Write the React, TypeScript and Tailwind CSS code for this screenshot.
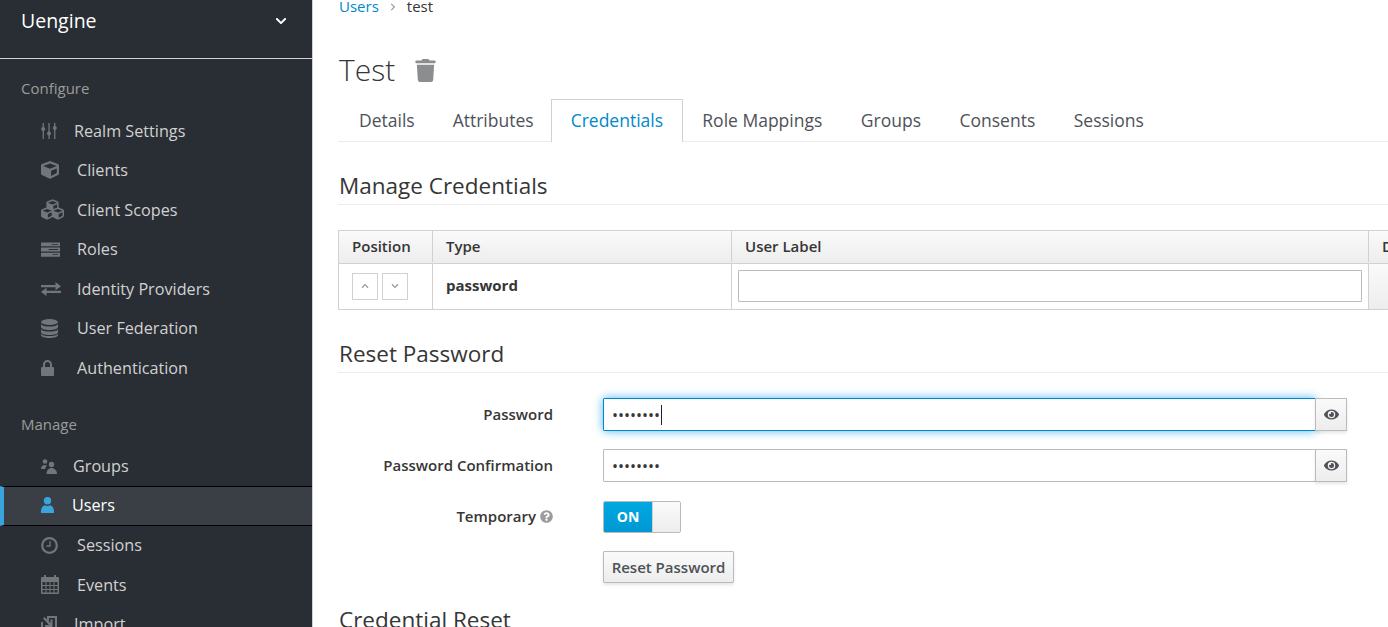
import { ReactNode } from 'react';
import { FaChevronDown, FaChevronUp, FaChevronRight, FaCube, FaCubes, FaEye, FaTrash, FaQuestionCircle } from 'react-icons/fa';

const SlidersIcon = () => (
  <svg viewBox="0 0 16 16" className="w-4 h-4" fill="currentColor">
    <rect x="1.6" y="0" width="1.3" height="16" />
    <rect x="7.4" y="0" width="1.3" height="16" />
    <rect x="13.1" y="0" width="1.3" height="16" />
    <circle cx="2.2" cy="6" r="2" />
    <circle cx="8" cy="10.5" r="2" />
    <circle cx="13.8" cy="5" r="2" />
  </svg>
);

const RolesIcon = () => (
  <svg viewBox="0 0 20 15" className="w-[19px] h-[15px]" fill="currentColor">
    <path d="M0 0h20v4.2h-20zM11 1.6v1h7v-1z" fillRule="evenodd" />
    <path d="M0 5.4h20v4.2h-20zM8 7v1h10v-1z" fillRule="evenodd" />
    <path d="M0 10.8h20v4.2h-20zM12 12.4v1h6v-1z" fillRule="evenodd" />
  </svg>
);

const ExchangeIcon = () => (
  <svg viewBox="0 0 20 14" className="w-[20px] h-[14px]" fill="currentColor">
    <path d="M0 3h14.5V0L20 4.2l-5.5 4V5.3H0z" />
    <path d="M20 8.7H5.5V5.8L0 10l5.5 4v-3H20z" />
  </svg>
);

const DatabaseIcon = () => (
  <svg viewBox="0 0 17 19" className="w-[17px] h-[19px]" fill="currentColor">
    <ellipse cx="8.5" cy="3" rx="8.5" ry="3" />
    <path d="M0 5c1 1.8 4.5 2.6 8.5 2.6S16 6.8 17 5v3c0 1.7-3.800 3-8.500 3S0 9.700 0 8z" />
    <path d="M0 10.200c1 1.800 4.500 2.400 8.500 2.400s7.500-.6 8.500-2.400v3c0 1.700-3.800 2.800-8.500 2.800S0 14.900 0 13.200z" />
    <path d="M0 14.800c1 1.800 4.500 2.300 8.500 2.300s7.500-.5 8.500-2.300V16c0 1.700-3.800 3-8.500 3S0 17.700 0 16z" />
  </svg>
);

const LockIcon = () => (
  <svg viewBox="0 0 13 16" className="w-[13px] h-[16px]" fill="currentColor">
    <path fillRule="evenodd" d="M2 7V4.500a4.500 4.500 0 0 1 9 0V7h1a1 1 0 0 1 1 1v7a1 1 0 0 1-1 1H1a1 1 0 0 1-1-1V8a1 1 0 0 1 1-1zm2 0h5V4.500a2.500 2.500 0 0 0-5 0z" />
  </svg>
);

const GroupsIcon = () => (
  <svg viewBox="0 0 16 15" className="w-[16px] h-[15px]" fill="currentColor">
    <circle cx="4" cy="2.500" r="2.300" />
    <path d="M0 10c0-2.500 1.500-4 4-4 .8 0 1.500.2 2 .5C4.800 7.500 4.300 8.800 4.200 10z" />
    <circle cx="10.500" cy="5.500" r="2.700" />
    <path d="M5.500 15c0-3.500 2-6 5-6s5.500 2.500 5.500 6z" />
  </svg>
);

const UserIcon = () => (
  <svg viewBox="0 0 13 16" className="w-[13px] h-[16px]" fill="currentColor">
    <circle cx="6.500" cy="3.700" r="3.700" />
    <path d="M0 16v-2c0-3 2-5.200 4-5.700.8.500 1.600.7 2.500.7s1.700-.2 2.500-.7c2 .5 4 2.700 4 5.700v2z" />
  </svg>
);

const ClockIcon = () => (
  <svg viewBox="0 0 17 17" className="w-[17px] h-[17px]" fill="none" stroke="currentColor">
    <circle cx="8.500" cy="8.500" r="7.300" strokeWidth="2.200" />
    <path d="M9 4v5H5.500" strokeWidth="1.300" />
  </svg>
);

const CalendarIcon = () => (
  <svg viewBox="0 0 18 19" className="w-[18px] h-[19px]" fill="currentColor">
    <path fillRule="evenodd" d="M1 2h2V0h2v2h8V0h2v2h2a1 1 0 0 1 1 1v15a1 1 0 0 1-1 1H1a1 1 0 0 1-1-1V3a1 1 0 0 1 1-1zm.5 5v3h3V7zm4 0v3h3V7zm4 0v3h3V7zm4 0v3h3V7zm-12 4v3h3v-3zm4 0v3h3v-3zm4 0v3h3v-3zm4 0v3h3v-3zm-12 4v2.500h3V15zm4 0v2.500h3V15zm4 0v2.500h3V15zm4 0v2.500h3V15z" />
  </svg>
);

const ImportIcon = () => (
  <svg viewBox="0 0 16 16" className="w-4 h-4" fill="currentColor">
    <path d="M6 0h10v16H10v-2h4V2H8v3H6z" />
    <path d="M0 6h2v8h-2zM0 14h8v2H0z" />
    <path d="M2 2.500 3.500 1l6 6V3.500h2V11H4V9h4z" />
  </svg>
);

type NavItem = { label: string; icon: ReactNode; iconWidth: string; active?: boolean };

const configureItems: NavItem[] = [
  { label: 'Realm Settings', icon: <SlidersIcon />, iconWidth: 'w-[33px]' },
  { label: 'Clients', icon: <FaCube size={18} />, iconWidth: 'w-[36px]' },
  { label: 'Client Scopes', icon: <FaCubes size={23} />, iconWidth: 'w-[36px]' },
  { label: 'Roles', icon: <RolesIcon />, iconWidth: 'w-[36px]' },
  { label: 'Identity Providers', icon: <ExchangeIcon />, iconWidth: 'w-[36px]' },
  { label: 'User Federation', icon: <DatabaseIcon />, iconWidth: 'w-[36px]' },
  { label: 'Authentication', icon: <LockIcon />, iconWidth: 'w-[36px]' },
];

const manageItems: NavItem[] = [
  { label: 'Groups', icon: <GroupsIcon />, iconWidth: 'w-[32px]' },
  { label: 'Users', icon: <UserIcon />, iconWidth: 'w-[31px]', active: true },
  { label: 'Sessions', icon: <ClockIcon />, iconWidth: 'w-[36px]' },
  { label: 'Events', icon: <CalendarIcon />, iconWidth: 'w-[36px]' },
  { label: 'Import', icon: <ImportIcon />, iconWidth: 'w-[33px]' },
];

const tabs = [
  { label: 'Details', className: 'h-[42px] pl-[21px] pr-[19px] flex items-center text-[#4d5258]' },
  { label: 'Attributes', className: 'h-[42px] pl-[19px] pr-[17px] flex items-center text-[#4d5258]' },
  { label: 'Credentials', className: 'h-[43px] px-[19px] pb-px flex items-center text-[#0088ce] bg-white border border-b-0 border-[#d1d1d1]' },
  { label: 'Role Mappings', className: 'h-[42px] px-[19.25px] flex items-center text-[#4d5258]' },
  { label: 'Groups', className: 'h-[42px] px-[19.25px] flex items-center text-[#4d5258]' },
  { label: 'Consents', className: 'h-[42px] px-[19.25px] flex items-center text-[#4d5258]' },
  { label: 'Sessions', className: 'h-[42px] px-[19.25px] flex items-center text-[#4d5258]' },
];

function SideLink({ item }: { item: NavItem }) {
  if (item.active) {
    return (
      <div className="h-[39.5px] pb-px flex items-center bg-[#393f44] border-y border-black border-l-4 border-l-[#39a5dc] pl-[37px] text-white text-[16.2px]">
        <span className={`${item.iconWidth} text-[#39a5dc] flex`}>{item.icon}</span>
        {item.label}
      </div>
    );
  }
  return (
    <div className="h-[39.5px] flex items-center pl-[41px] text-[#d1d1d1] text-[16.2px]">
      <span className={`${item.iconWidth} text-[#72767b] flex`}>{item.icon}</span>
      {item.label}
    </div>
  );
}

function PasswordRow({ label, focused }: { label: string; focused?: boolean }) {
  return (
    <div className="flex items-center h-[33px]">
      <div className="w-[215px] text-right text-[15px] font-semibold text-[#363636]">{label}</div>
      <div className="ml-[50px] flex w-[744px] h-[33px]">
        <div className={`flex-1 flex items-center pl-2 text-[#363636] text-[16px] rounded-[1px] border ${focused ? 'border-[#0088ce] shadow-[0_0_10px_rgba(0,150,230,0.7)]' : 'border-[#bbb]'}`}>
          ••••••••
          {focused && <span className="w-px h-[20px] bg-[#222] ml-px" />}
        </div>
        <div className="w-[32px] -ml-px flex items-center justify-center border border-[#bbb] bg-gradient-to-b from-[#fafafa] to-[#ededed] text-[#4d5258] shadow-[0_2px_3px_rgba(3,3,3,0.1)]">
          <FaEye size={15} />
        </div>
      </div>
    </div>
  );
}

export default function App() {
  return (
    <div className="flex h-[627px] w-[1388px] overflow-hidden bg-white font-['Open_Sans',sans-serif]">
      <aside className="w-[313px] shrink-0 bg-[#292e34] border-r border-[#d1d1d1]">
        <div className="h-[59px] border-b border-[#d1d1d1] flex items-start justify-between pl-[21px] pr-[25px] pt-[7px]">
          <span className="text-white text-[19.5px] leading-[28px]">Uengine</span>
          <FaChevronDown size={12} className="text-white mt-[8px]" />
        </div>
        <div className="mt-[18px] pl-[21px] text-[#9c9c9c] text-[15px] leading-[22px]">Configure</div>
        <div className="mt-[12px]">
          {configureItems.map(item => <SideLink key={item.label} item={item} />)}
        </div>
        <div className="mt-[25px] pl-[21px] text-[#9c9c9c] text-[15px] leading-[22px]">Manage</div>
        <div className="mt-[12px]">
          {manageItems.map(item => <SideLink key={item.label} item={item} />)}
        </div>
      </aside>

      <main className="flex-1 min-w-0 pl-[25px] overflow-hidden text-[#363636]">
        <div className="w-[1100px]">
          <div className="flex items-center h-[13px] pl-px text-[15px] leading-[13px]">
            <span className="text-[#0088ce]">Users</span>
            <FaChevronRight size={8} className="mx-[10px] text-[#9c9c9c]" />
            <span>test</span>
          </div>

          <div className="flex items-center mt-[35px] h-[44px] pl-px">
            <h1 className="text-[30px] font-light text-[#363636] pb-[2px]">Test</h1>
            <FaTrash size={23} className="ml-[19px] text-[#8b8d8f]" />
          </div>

          <div className="flex h-[43px] mt-[7px] border-b border-[#ededed] text-[17.5px]">
            {tabs.map(tab => (
              <div key={tab.label} className={tab.className}>{tab.label}</div>
            ))}
          </div>

          <h2 className="mt-[29px] pl-px text-[22.5px] leading-[30px] text-[#363636] pb-[3px] border-b border-[#ededed]">Manage Credentials</h2>

          <div className="mt-[25px] w-[1100px] border border-[#d1d1d1] text-[15px]">
            <div className="flex h-[33px] pb-px border-b border-[#d1d1d1] bg-gradient-to-b from-[#fafafa] to-[#ededed] font-semibold">
              <div className="w-[94px] pl-[13px] flex items-center border-r border-[#d1d1d1]">Position</div>
              <div className="w-[299px] pl-[13px] flex items-center border-r border-[#d1d1d1]">Type</div>
              <div className="w-[637px] pl-[13px] flex items-center border-r border-[#d1d1d1]">User Label</div>
              <div className="flex-1 pl-[13px] flex items-center">Data</div>
            </div>
            <div className="flex h-[45px]">
              <div className="w-[94px] flex items-center gap-[4px] pl-[13px] pb-px border-r border-[#d1d1d1]">
                <div className="w-[26px] h-[27px] border border-[#d1d1d1] flex items-center justify-center text-[#9c9c9c]"><FaChevronUp size={8} /></div>
                <div className="w-[26px] h-[27px] border border-[#d1d1d1] flex items-center justify-center text-[#9c9c9c]"><FaChevronDown size={8} /></div>
              </div>
              <div className="w-[299px] pl-[13px] pb-[2px] flex items-center border-r border-[#d1d1d1] font-bold">password</div>
              <div className="w-[637px] pl-[6px] pr-[6px] pb-[2px] flex items-center border-r border-[#d1d1d1]">
                <div className="w-full h-[32px] border border-[#bbb] rounded-[1px]" />
              </div>
              <div className="flex-1 bg-gradient-to-b from-[#fafafa] to-[#ededed]" />
            </div>
          </div>

          <h2 className="mt-[29px] pl-px text-[22.5px] leading-[30px] pb-[3px] border-b border-[#ededed]">Reset Password</h2>

          <div className="mt-[25px] flex flex-col gap-[18px]">
            <PasswordRow label="Password" focused />
            <PasswordRow label="Password Confirmation" />
            <div className="flex items-center h-[33px]">
              <div className="w-[215px] flex items-center justify-end gap-[4px] text-[15px] font-semibold">
                Temporary <FaQuestionCircle size={13} className="text-[#9c9c9c]" />
              </div>
              <div className="ml-[50px] flex w-[78px] h-[32px] border border-[#bbb] rounded-[2px] overflow-hidden">
                <div className="w-[48px] bg-gradient-to-b from-[#00a8e1] to-[#0099d3] text-white font-bold text-[14px] flex items-center justify-center">ON</div>
                <div className="flex-1 border-l border-[#d1d1d1] bg-gradient-to-b from-[#fafafa] to-[#ededed]" />
              </div>
            </div>
            <div className="ml-[265px] w-[131px] h-[32px] flex items-center justify-center border border-[#bbb] rounded-[1px] bg-gradient-to-b from-[#fafafa] to-[#ededed] text-[15px] font-semibold text-[#4d5258] shadow-[0_2px_3px_rgba(3,3,3,0.1)]">
              Reset Password
            </div>
          </div>

          <h2 className="mt-[22px] pl-px text-[22.5px] leading-[30px]">Credential Reset</h2>
        </div>
      </main>
    </div>
  );
}
